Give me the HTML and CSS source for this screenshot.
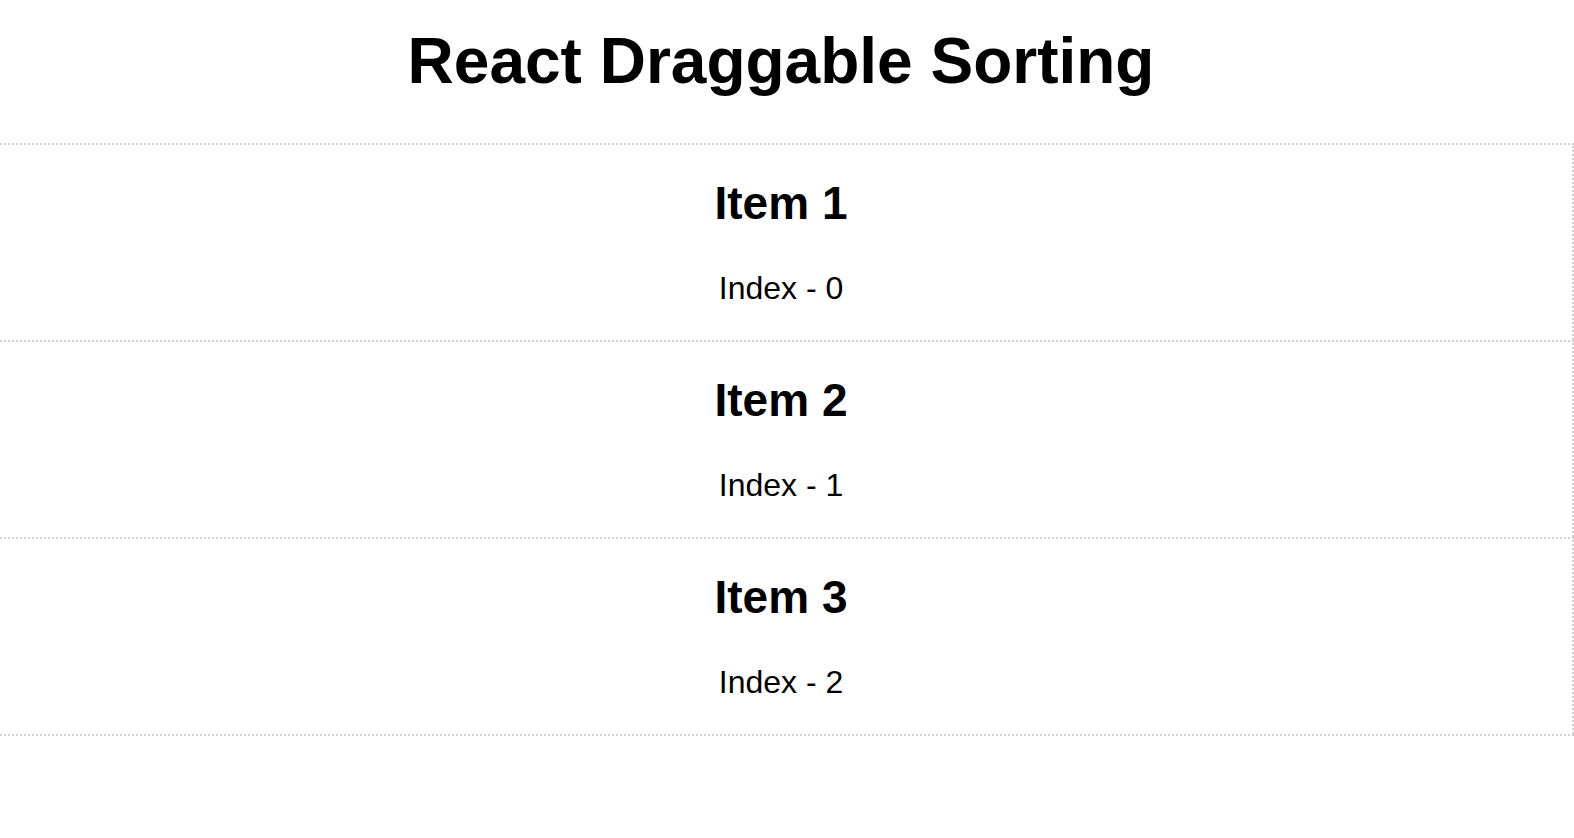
FILE: index.html
```html
<!DOCTYPE html>
<html lang="en">
<head>
<meta charset="utf-8">
<title>React Draggable Sorting</title>
<link rel="stylesheet" href="styles.css">
</head>
<body>
<div class="app">
  <h1 class="title">React Draggable Sorting</h1>
  <div class="list">
    <div class="item">
      <h2 class="item-title">Item 1</h2>
      <p class="item-index">Index - 0</p>
    </div>
    <div class="item">
      <h2 class="item-title">Item 2</h2>
      <p class="item-index">Index - 1</p>
    </div>
    <div class="item">
      <h2 class="item-title">Item 3</h2>
      <p class="item-index">Index - 2</p>
    </div>
  </div>
</div>
</body>
</html>
```

FILE: styles.css
```css
html, body {
  margin: 0;
  padding: 0;
  background: #ffffff;
  overflow: hidden;
}

body {
  font-family: "Liberation Sans", Arial, Helvetica, sans-serif;
  color: #000000;
}

.app {
  text-align: center;
  margin-left: -12px;
  margin-right: 0;
}

.title {
  font-size: 64px;
  line-height: 74px;
  font-weight: bold;
  margin: 24px 0 45px;
}

.list {
  border-bottom: 2px dotted #d2d2d2;
}

.item {
  border-top: 2px dotted #d2d2d2;
  border-right: 2px dotted #d2d2d2;
  border-left: 2px dotted #d2d2d2;
  padding: 31px 0 33px;
  display: flex;
  flex-direction: column;
  gap: 39px;
}

.item-title {
  margin: 0;
  font-size: 46px;
  line-height: 55px;
  font-weight: bold;
}

.item-index {
  margin: 0;
  font-size: 32px;
  line-height: 37px;
}
```
